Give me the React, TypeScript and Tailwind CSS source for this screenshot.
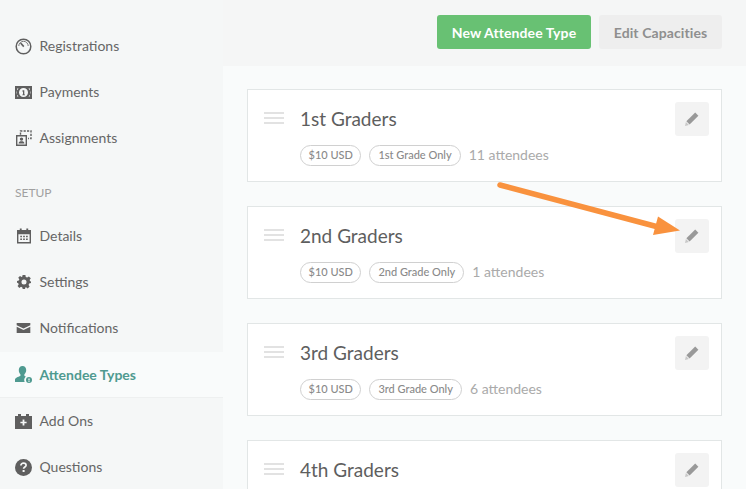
import React from "react";

const Gauge = () => (
  <svg width="17" height="17" viewBox="0 0 17 17" fill="none">
    <circle cx="8.5" cy="8.5" r="7.3" stroke="#5f5f5f" strokeWidth="1.5" />
    <path d="M3.8 8A4.7 4.7 0 0 1 13.2 8" stroke="#7a7a7a" strokeWidth="1" />
    <path d="M5.6 5L8.8 8.6" stroke="#5f5f5f" strokeWidth="1.6" />
  </svg>
);
const Money = () => (
  <svg width="17" height="13" viewBox="0 0 17 13">
    <path fillRule="evenodd" fill="#5f5f5f" d="M0 0H17V13H0ZM2 2.5V10.5H3.6A4.9 4.9 0 0 1 3.6 2.5ZM15 2.5H13.4A4.9 4.9 0 0 1 13.4 10.5H15ZM8.5 2A4.5 4.5 0 1 0 8.5 11A4.5 4.5 0 1 0 8.5 2Z" />
    <path fill="#5f5f5f" d="M7.6 4.2H9.3V8.4H10V9.3H7.3V8.4H8V5.4H7.2Z" />
  </svg>
);
const Assign = () => (
  <svg width="17" height="16" viewBox="0 0 17 16" fill="none">
    <path d="M5.5 4.7V1H16V8.5H13" stroke="#5f5f5f" strokeWidth="1.4" strokeDasharray="2.2 1.2" />
    <path fillRule="evenodd" fill="#5f5f5f" d="M1 5H12V16H1ZM2.4 6.4V14.6H10.6V6.4ZM6.5 7.4A1.7 1.7 0 1 1 6.5 10.8A1.7 1.7 0 1 1 6.5 7.4ZM3.6 13.6C3.6 11.8 4.8 11.2 6.5 11.2C8.2 11.2 9.4 11.8 9.4 13.6Z" />
  </svg>
);
const Calendar = () => (
  <svg width="14" height="16" viewBox="0 0 15 16">
    <path fillRule="evenodd" fill="#5f5f5f" d="M3 0H5V1.6H10V0H12V1.6H15V16H0V1.6H3ZM1.5 6V14.5H13.5V6Z" />
    <path fill="#5f5f5f" d="M3.5 7.8H5.3V9.4H3.5ZM6.6 7.8H8.4V9.4H6.6ZM9.7 7.8H11.5V9.4H9.7ZM3.5 10.8H5.3V12.4H3.5ZM6.6 10.8H8.4V12.4H6.6ZM9.7 10.8H11.5V12.4H9.7Z" />
  </svg>
);
const Gear = () => (
  <svg width="14" height="14" viewBox="0 0 15 15">
    <path fillRule="evenodd" fill="#5f5f5f" d="M6 0H9L9.4 2.1L10.9 2.7L12.7 1.5L14.8 3.6L13.5 5.4L14.1 6.8L15 7V8.6L13 9.1L12.4 10.6L13.5 12.4L11.5 14.4L9.7 13.2L8.9 13.5L8.6 15H6.1L5.7 13.3L4.3 12.7L2.5 13.9L0.6 11.9L1.8 10.2L1.2 8.7L0 8.4V6.4L1.9 6L2.5 4.6L1.3 2.9L3.2 1L5 2.1L5.6 1.9ZM7.5 4.8A2.7 2.7 0 1 0 7.5 10.2A2.7 2.7 0 1 0 7.5 4.8Z" />
  </svg>
);
const Mail = () => (
  <svg width="15" height="10" viewBox="0 0 15 11">
    <path fill="#5f5f5f" d="M0 0H15V2.4L7.5 6L0 2.4ZM0 4.2L7.5 7.8L15 4.2V11H0Z" />
  </svg>
);
const Person = () => (
  <svg width="17" height="17" viewBox="0 0 17 17">
    <path fill="#4f9a90" d="M7.5 0C10 0 11.2 1.8 11.2 4C11.2 6 10.3 7.4 9.4 8.2V10C9.9 10.2 10.4 10.5 10.9 10.8C9.8 11.5 9.2 12.7 9.2 14C9.2 14.7 9.3 15.4 9.7 16H0V13.6C0 12 3 10.9 5.4 10V8.2C4.5 7.4 3.8 6 3.8 4C3.8 1.8 5 0 7.5 0Z" />
    <circle cx="14" cy="14" r="3" fill="#4f9a90" />
    <rect x="13.4" y="12.5" width="1.2" height="2" fill="#f9fbfb" />
    <rect x="13.4" y="15" width="1.2" height="0.9" fill="#f9fbfb" />
  </svg>
);
const Addon = () => (
  <svg width="17" height="15" viewBox="0 0 17 15">
    <path fillRule="evenodd" fill="#5f5f5f" d="M3 0H6V2H11V0H14V2H17V15H0V2H3ZM7.6 5.5V7.7H5.4V9.3H7.6V11.5H9.4V9.3H11.6V7.7H9.4V5.5Z" />
  </svg>
);
const Help = () => (
  <svg width="17" height="17" viewBox="0 0 17 17">
    <circle cx="8.5" cy="8.5" r="8.5" fill="#5f5f5f" />
    <path d="M5.9 6.5C5.9 5 7 4.2 8.5 4.2C10 4.2 11.1 5 11.1 6.3C11.1 8 8.6 8 8.6 9.8" fill="none" stroke="#f5f7f7" strokeWidth="1.7" />
    <rect x="7.6" y="11" width="2" height="2" fill="#f5f7f7" />
  </svg>
);
const Pencil = () => (
  <svg width="14" height="14" viewBox="0 0 14 14">
    <path fill="#999999" d="M10.2 0.6L13.4 3.8L4.6 12.4L1.4 9.2Z" />
    <path fill="#c8c8c8" d="M0.9 10L3.9 13L0 14Z" />
  </svg>
);

const NavItem = ({ icon, label, active }: { icon: React.ReactNode; label: string; active?: boolean }) => (
  <div className={`flex items-center h-[46px] ${active ? "mt-[1px] bg-[#f9fbfb] text-[#4f9a90] font-bold border-b border-[#eef0f0]" : "text-[#666666]"}`}>
    <span className="w-[17px] ml-[15px] mr-[7.5px] flex justify-center items-center">{icon}</span>
    <span className="text-[14px] leading-none">{label}</span>
  </div>
);

const Card = ({ title, grade, count }: { title: string; grade?: string; count?: string }) => (
  <div className="bg-white border border-[#e2e6e6] h-[93px] shrink-0 flex pl-[16px] pt-[12px] pr-[12px]">
    <div className="w-[20px] mt-[10px] flex flex-col gap-[3px] shrink-0">
      <div className="h-[2px] bg-[#e2e2e2]" />
      <div className="h-[2px] bg-[#e2e2e2]" />
      <div className="h-[2px] bg-[#e2e2e2]" />
    </div>
    <div className="ml-[16px] flex-1">
      <div className="text-[19px] leading-[32px] pt-[1px] text-[#5e5e5e]">{title}</div>
      {grade && (
        <div className="flex items-center mt-[10px] gap-[8px]">
          <span className="h-[21px] px-[7.5px] flex items-center rounded-full border border-[#d0d0d0] text-[11px] font-medium text-[#8a8a8a]">$10 USD</span>
          <span className="h-[21px] px-[8px] flex items-center rounded-full border border-[#d0d0d0] text-[11px] font-medium text-[#8a8a8a]">{grade}</span>
          <span className="text-[14px] leading-[19px] pb-[2px] text-[#aaaaaa]">{count}</span>
        </div>
      )}
    </div>
    <button className="w-[34px] h-[34px] rounded-[3px] bg-[#f3f3f3] flex items-center justify-center shrink-0">
      <Pencil />
    </button>
  </div>
);

export default function App() {
  return (
    <div className="relative flex w-[746px] h-[489px] overflow-hidden bg-[#f9fbfb] font-['Lato','Open_Sans',sans-serif]">
      <aside className="w-[223px] shrink-0 bg-[#f5f7f7] pt-[23px]">
        <NavItem icon={<Gauge />} label="Registrations" />
        <NavItem icon={<Money />} label="Payments" />
        <NavItem icon={<Assign />} label="Assignments" />
        <div className="h-[52px] pl-[15px] pt-[25px] text-[12px] leading-[14px] text-[#a0a0a0]">SETUP</div>
        <NavItem icon={<Calendar />} label="Details" />
        <NavItem icon={<Gear />} label="Settings" />
        <NavItem icon={<Mail />} label="Notifications" />
        <NavItem icon={<Person />} label="Attendee Types" active />
        <NavItem icon={<Addon />} label="Add Ons" />
        <NavItem icon={<Help />} label="Questions" />
      </aside>
      <main className="flex-1 flex flex-col min-w-0">
        <header className="h-[66px] shrink-0 bg-[#f5f6f6] flex items-center justify-end gap-[8px] pr-[24px] pb-[2px]">
          <button className="h-[34px] w-[154px] rounded-[3px] bg-[#68c173] text-white font-bold text-[14px] tracking-[0.1px]">New Attendee Type</button>
          <button className="h-[34px] w-[123px] rounded-[3px] bg-[#eeeeee] text-[#8f8f8f] font-bold text-[14px] tracking-[0.1px]">Edit Capacities</button>
        </header>
        <div className="flex flex-col gap-[24px] pt-[23px] pl-[24px] pr-[24px]">
          <Card title="1st Graders" grade="1st Grade Only" count="11 attendees" />
          <Card title="2nd Graders" grade="2nd Grade Only" count="1 attendees" />
          <Card title="3rd Graders" grade="3rd Grade Only" count="6 attendees" />
          <Card title="4th Graders" />
        </div>
      </main>
      <svg className="absolute left-0 top-0 pointer-events-none" width="746" height="489" viewBox="0 0 746 489" fill="none">
        <path d="M500 185L662 228" stroke="#f9923e" strokeWidth="5.5" strokeLinecap="round" />
        <path d="M658 216.5L680 230.5L653 235Z" fill="#f9923e" />
      </svg>
    </div>
  );
}
